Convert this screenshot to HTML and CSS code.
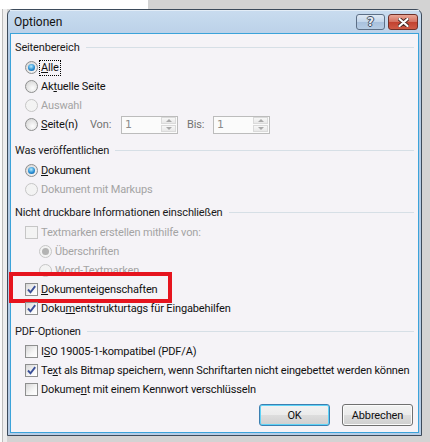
FILE: index.html
```html
<!DOCTYPE html>
<html lang="de">
<head>
    <meta charset="UTF-8">
    <meta name="viewport" content="width=device-width, initial-scale=1.0">
    <title>Optionen</title>
    <link rel="stylesheet" href="styles.css">
</head>
<body>
    <div class="window">
        <div class="titlebar">
            <span class="title">Optionen</span>
            <div class="caption">
                <span class="cap help">?</span>
                <span class="cap close">
                    <svg width="11" height="9" viewBox="0 0 11 9">
                        <path d="M1.5 1 L9.5 8 M9.5 1 L1.5 8" stroke="#4a2a26" stroke-width="4" stroke-linecap="round"/>
                        <path d="M1.5 1 L9.5 8 M9.5 1 L1.5 8" stroke="#fff" stroke-width="2.2" stroke-linecap="round"/>
                    </svg>
                </span>
            </div>
        </div>

        <div class="client">
            <div class="group-head"><span>Seitenbereich</span><i class="rule"></i></div>
            <div class="row">
                <span class="radio checked"></span>
                <span class="focus"><u>A</u>lle</span>
            </div>
            <div class="row">
                <span class="radio"></span>
                <span>Ak<u>t</u>uelle Seite</span>
            </div>
            <div class="row disabled">
                <span class="radio"></span>
                <span>Auswahl</span>
            </div>
            <div class="row">
                <div class="pages">
                    <span class="radio"></span>
                    <span><u>S</u>eite(n)</span>
                </div>
                <span class="spin-label von">Von:</span>
                <div class="spinner">
                    <span class="spin-value">1</span>
                    <div class="spin-arrows">
                        <span class="arrow up"></span>
                        <span class="arrow down"></span>
                    </div>
                </div>
                <span class="spin-label bis">Bis:</span>
                <div class="spinner">
                    <span class="spin-value">1</span>
                    <div class="spin-arrows">
                        <span class="arrow up"></span>
                        <span class="arrow down"></span>
                    </div>
                </div>
            </div>

            <div class="group-head wide"><span>Was veröffentlichen</span><i class="rule"></i></div>
            <div class="row">
                <span class="radio checked"></span>
                <span><u>D</u>okument</span>
            </div>
            <div class="row disabled">
                <span class="radio"></span>
                <span>Dokument mit Markups</span>
            </div>

            <div class="group-head"><span>Nicht druckbare Informationen einschließen</span><i class="rule"></i></div>
            <div class="row disabled">
                <span class="check"></span>
                <span>Textmarken erstellen mithilfe von:</span>
            </div>
            <div class="row sub disabled">
                <span class="radio checked"></span>
                <span>Überschriften</span>
            </div>
            <div class="row sub disabled">
                <span class="radio"></span>
                <span>Word-Textmarken</span>
            </div>
            <div class="row marked">
                <span class="check checked">
                    <svg width="11" height="11" viewBox="0 0 11 11"><path d="M2 5.5 L4.5 8.3 L9.2 2.2" fill="none" stroke="#3a4f98" stroke-width="1.9"/></svg>
                </span>
                <span><u>D</u>okumenteigenschaften</span>
                <span class="highlight"></span>
            </div>
            <div class="row">
                <span class="check checked">
                    <svg width="11" height="11" viewBox="0 0 11 11"><path d="M2 5.5 L4.5 8.3 L9.2 2.2" fill="none" stroke="#3a4f98" stroke-width="1.9"/></svg>
                </span>
                <span>Doku<u>m</u>entstrukturtags für Eingabehilfen</span>
            </div>

            <div class="group-head"><span>PDF-Optionen</span><i class="rule"></i></div>
            <div class="row">
                <span class="check"></span>
                <span>I<u>S</u>O 19005-1-kompatibel (PDF/A)</span>
            </div>
            <div class="row">
                <span class="check checked">
                    <svg width="11" height="11" viewBox="0 0 11 11"><path d="M2 5.5 L4.5 8.3 L9.2 2.2" fill="none" stroke="#3a4f98" stroke-width="1.9"/></svg>
                </span>
                <span>Te<u>x</u>t als Bitmap speichern, wenn Schriftarten nicht eingebettet werden können</span>
            </div>
            <div class="row">
                <span class="check"></span>
                <span>Dokume<u>n</u>t mit einem Kennwort verschlüsseln</span>
            </div>

            <div class="buttons">
                <button class="btn default">OK</button>
                <button class="btn">Abbrechen</button>
            </div>
        </div>
    </div>
</body>
</html>
```

FILE: styles.css
```css
body {
    margin: 0;
    height: 442px;
    overflow: hidden;
    font-family: Roboto, "Noto Sans", sans-serif;
    font-size: 11px;
    letter-spacing: -0.15px;
    color: #111;
    background:
        linear-gradient(#fff, #fff) 0 0 / 148px 9px no-repeat,
        linear-gradient(90deg, #fafafa 0 2px, #bdbdbd 2px 3px, #ededed 3px 7px) 0 0 / 7px 100% no-repeat,
        #d3d3d3;
}
.window {
    margin: 9px 0 0 7px;
    width: 415px;
    height: 427px;
    box-sizing: border-box;
    border: 1px solid #3d4b5b;
    border-radius: 6px 6px 0 0;
    padding: 0 2px 2px 2px;
    background: linear-gradient(#c9dcef, #b2cae4 40px, #b6cde6);
    display: flex;
    flex-direction: column;
}
.titlebar {
    height: 23px;
    flex-shrink: 0;
    display: flex;
    justify-content: space-between;
    padding-left: 4px;
    box-shadow: inset 0 1px 0 #e3edf7;
}
.title {
    font-size: 12px;
    letter-spacing: 0;
    line-height: 25px;
    color: #111;
}
.caption {
    display: flex;
    gap: 3px;
    padding-top: 4px;
    margin-right: 1px;
}
.cap {
    height: 16px;
    box-sizing: border-box;
    border: 1px solid #5d6f86;
    border-radius: 3px;
    display: flex;
    align-items: center;
    justify-content: center;
}
.help {
    width: 29px;
    background: linear-gradient(#dfe9f4, #c2d5ea 50%, #a9c1dd 51%, #b6cce4);
    font-family: "DejaVu Sans", sans-serif;
    font-weight: bold;
    font-size: 12px;
    color: #e6ecf3;
    text-shadow: -1px 0 #3f4e62, 1px 0 #3f4e62, 0 -1px #3f4e62, 0 1px #3f4e62;
}
.close {
    width: 30px;
    border-color: #6e3029;
    background: linear-gradient(#e9a797, #d36e5e 50%, #c2412f 51%, #cf5a45);
}
.client {
    flex: 1;
    border: 1px solid #3ba3da;
    background: #f5f3f7;
    padding: 3px 4px 6px 4px;
}
.group-head {
    height: 21px;
    display: flex;
    align-items: center;
    color: #1b1b1b;
    margin-top: 3px;
}
.group-head:first-child {
    margin-top: 0;
}
.group-head.wide {
    margin-top: 6px;
}
.rule {
    flex: 1;
    height: 1px;
    background: #d6dfe6;
    margin-left: 6px;
}
.row {
    height: 19px;
    display: flex;
    align-items: center;
    padding-left: 10px;
    position: relative;
    white-space: nowrap;
}
.row.sub {
    padding-left: 24px;
}
.row.disabled {
    color: #a4a4a4;
}
.radio, .check {
    width: 13px;
    height: 13px;
    box-sizing: border-box;
    border: 1px solid #8e8f8f;
    margin-right: 3px;
    flex-shrink: 0;
    display: flex;
    align-items: center;
    justify-content: center;
}
.radio {
    border-radius: 50%;
    background: radial-gradient(circle at 60% 65%, #fdfdfd, #e4e4e4 55%, #cfcfcf);
}
.radio.checked::after {
    content: "";
    width: 7px;
    height: 7px;
    border-radius: 50%;
    background: radial-gradient(circle at 45% 35%, #b6ecff, #2a8fd3 55%, #0c4d8e);
}
.check {
    background: linear-gradient(135deg, #d6d6d6, #f6f6f6 60%, #fff);
}
.disabled .radio, .disabled .check {
    border-color: #c6c6c6;
    background: #f3f3f3;
}
.disabled .radio.checked::after {
    background: #b3b3b3;
}
.focus {
    border: 1px dotted #000;
    padding: 0 1px;
    margin-left: -2px;
    line-height: 14px;
}
.pages {
    width: 65px;
    display: flex;
    align-items: center;
}
.spin-label {
    color: #737373;
}
.von {
    width: 31px;
}
.bis {
    width: 26px;
    margin-left: 9px;
}
.spinner {
    width: 57px;
    height: 18px;
    box-sizing: border-box;
    border: 1px solid #bcbcbc;
    background: #fbfbfb;
    display: flex;
    justify-content: space-between;
}
.spin-value {
    color: #8c8c8c;
    padding-left: 3px;
    line-height: 16px;
    font-family: "DejaVu Sans", sans-serif;
    font-size: 11px;
}
.spin-arrows {
    width: 15px;
    display: flex;
    flex-direction: column;
    gap: 1px;
    padding: 0 1px 1px 0;
}
.arrow {
    flex: 1;
    border: 1px solid #dadada;
    background: linear-gradient(#f7f7f7, #e8e8e8);
    display: flex;
    align-items: center;
    justify-content: center;
}
.arrow::after {
    content: "";
    border-left: 3px solid transparent;
    border-right: 3px solid transparent;
}
.up::after {
    border-bottom: 3px solid #a9a9a9;
}
.down::after {
    border-top: 3px solid #a9a9a9;
}
.highlight {
    position: absolute;
    left: -6px;
    top: -8px;
    width: 163px;
    height: 31px;
    box-sizing: border-box;
    border: 4px solid #e6141e;
}
.buttons {
    display: flex;
    justify-content: flex-end;
    gap: 12px;
    margin-top: 5px;
    margin-right: 1px;
}
.btn {
    width: 71px;
    height: 22px;
    border: 1px solid #707070;
    border-radius: 3px;
    background: linear-gradient(#f2f2f2, #ebebeb 50%, #dddddd 51%, #cfcfcf);
    box-shadow: inset 0 0 0 1px #fbfbfb;
    font-family: inherit;
    font-size: 11px;
    letter-spacing: inherit;
    color: #111;
    padding: 0;
}
.btn.default {
    border-color: #3c7fb1;
    box-shadow: inset 0 0 0 1px #5fd3f7;
}
```
